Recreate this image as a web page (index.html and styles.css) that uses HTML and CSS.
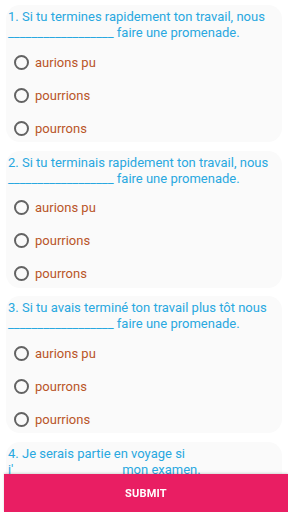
FILE: index.html
```html
<!DOCTYPE html>
<html>
<head>
    <title>Quiz</title>
    <link rel="stylesheet" href="styles.css">
</head>
<body>
    <div class="questions">
        <div class="card">
            <div class="question">1. Si tu termines rapidement ton travail, nous __________________ faire une promenade.</div>
            <div class="options">
                <label class="option"><span class="radio"></span>aurions pu</label>
                <label class="option"><span class="radio"></span>pourrions</label>
                <label class="option"><span class="radio"></span>pourrons</label>
            </div>
        </div>

        <div class="card">
            <div class="question">2. Si tu terminais rapidement ton travail, nous __________________ faire une promenade.</div>
            <div class="options">
                <label class="option"><span class="radio"></span>aurions pu</label>
                <label class="option"><span class="radio"></span>pourrions</label>
                <label class="option"><span class="radio"></span>pourrons</label>
            </div>
        </div>

        <div class="card">
            <div class="question">3. Si tu avais terminé ton travail plus tôt nous __________________ faire une promenade.</div>
            <div class="options">
                <label class="option"><span class="radio"></span>aurions pu</label>
                <label class="option"><span class="radio"></span>pourrons</label>
                <label class="option"><span class="radio"></span>pourrions</label>
            </div>
        </div>

        <div class="card">
            <div class="question">4. Je serais partie en voyage si j'__________________ mon examen.</div>
        </div>
    </div>

    <button class="submit">SUBMIT</button>
</body>
</html>
```

FILE: styles.css
```css
* {
    margin: 0;
    padding: 0;
    box-sizing: border-box;
}

body {
    font-family: Roboto, "Noto Sans", sans-serif;
    background: #ffffff;
    overflow: hidden;
}

.questions {
    display: flex;
    flex-direction: column;
    gap: 8.5px;
    padding: 5px 6px 60px 6px;
}

.card {
    background: #fafafa;
    border-radius: 14px;
    padding: 4px 0 0 2px;
    height: 137px;
}

.question {
    font-size: 13px;
    line-height: 16px;
    color: #29a8e0;
    margin-bottom: 7px;
    padding-right: 12px;
}

.options {
    display: flex;
    flex-direction: column;
    gap: 5px;
}

.option {
    display: flex;
    align-items: center;
    height: 28px;
    font-size: 13px;
    color: #b95528;
}

.radio {
    width: 15px;
    height: 15px;
    border: 2px solid #636363;
    border-radius: 50%;
    margin: 0 6px 0 6px;
}

.submit {
    position: fixed;
    left: 4px;
    right: 0;
    bottom: 0;
    height: 38px;
    border: none;
    background: #e91e63;
    color: #ffffff;
    font-family: Roboto, sans-serif;
    font-weight: 700;
    font-size: 11px;
    letter-spacing: 0.2px;
    box-shadow: 0 -1px 2px rgba(0,0,0,0.15);
}
```
